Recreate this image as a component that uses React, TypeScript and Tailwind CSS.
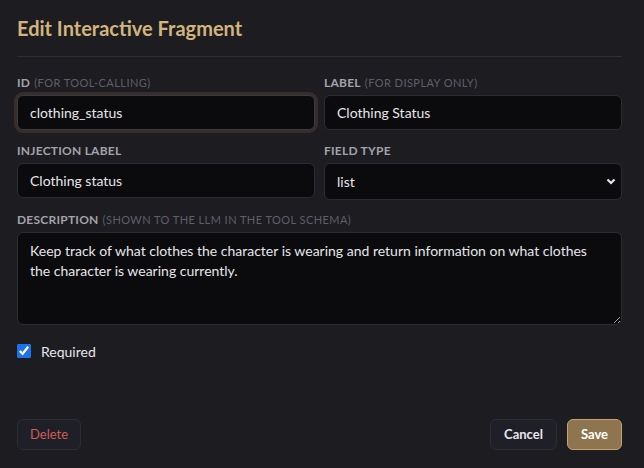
import { useState } from "react";

type LabelProps = {
    main: string
    hint?: string
}

function FieldLabel({ main, hint }: LabelProps) {
    return (
        <label className="block text-[12px] font-bold uppercase tracking-[0.02em] text-[#a3a3ab] leading-[16px] mb-[4px]">
            {main}
            {hint && <span className="ml-1 text-[11px] font-normal text-[#5f5f68] tracking-[0.04em]">{hint}</span>}
        </label>
    );
}

const inputCls =
    "w-full h-[35px] rounded-md border border-[#2c2c33] bg-[#0b0b0d] px-3 text-[14px] text-[#e6e6ea] outline-none";

export default function App() {
    const [required, setRequired] = useState(true);

    return (
        <div className="w-[644px] h-[468px] bg-[#1c1c21] font-['Lato','Liberation_Sans',sans-serif] flex flex-col pl-[17px] pr-[22px]">
            <h1 className="pt-[15px] pb-[15px] text-[20px] font-bold text-[#d3b47c] leading-[26px] border-b border-[#2e2e35]">
                Edit Interactive Fragment
            </h1>

            <div className="grid grid-cols-2 gap-x-[9px] gap-y-[13px] mt-[18px]">
                <div>
                    <FieldLabel main="ID" hint="(for tool-calling)" />
                    <input
                        className={inputCls + " ring-[3px] ring-[#352e2b] border-[#3a3a40]"}
                        defaultValue="clothing_status"
                    />
                </div>
                <div>
                    <FieldLabel main="Label" hint="(for display only)" />
                    <input className={inputCls} defaultValue="Clothing Status" />
                </div>
                <div>
                    <FieldLabel main="Injection Label" />
                    <input className={inputCls} defaultValue="Clothing status" />
                </div>
                <div>
                    <FieldLabel main="Field Type" />
                    <div className="relative">
                        <select className={inputCls + " h-[37px] appearance-none"} defaultValue="list">
                            <option value="text">text</option>
                            <option value="list">list</option>
                            <option value="number">number</option>
                        </select>
                        <svg
                            className="absolute right-[6px] top-[15px] pointer-events-none"
                            width="10"
                            height="7"
                            viewBox="0 0 10 7"
                        >
                            <path d="M1.5 1.5 L5 5 L8.5 1.5" fill="none" stroke="#e6e6ea" strokeWidth="2.2" />
                        </svg>
                    </div>
                </div>
                <div className="col-span-2 -mt-[1px]">
                    <FieldLabel main="Description" hint="(shown to the LLM in the tool schema)" />
                    <textarea
                        className="block w-full h-[93px] rounded-md border border-[#2c2c33] bg-[#0b0b0d] px-3 pt-[8px] text-[14px] leading-[20px] text-[#e6e6ea] outline-none"
                        defaultValue="Keep track of what clothes the character is wearing and return information on what clothes the character is wearing currently."
                    />
                </div>
            </div>

            <label className="flex items-center gap-[10px] mt-[16px] h-[20px] text-[14px] text-[#e6e6ea]">
                <input
                    type="checkbox"
                    checked={required}
                    onChange={(e) => setRequired(e.target.checked)}
                    className="w-[14px] h-[14px] accent-[#1a73e8]"
                />
                Required
            </label>

            <div className="mt-auto mb-[18px] flex items-center">
                <button className="h-[31px] px-[12px] rounded-md border border-[#2c2c33] bg-[#1f2027] text-[13px] text-[#d05a5a]">
                    Delete
                </button>
                <div className="ml-auto flex gap-[10px]">
                    <button className="h-[31px] px-[13px] rounded-md border border-[#2c2c33] bg-[#1f2027] text-[13px] font-bold text-[#e6e6ea]">
                        Cancel
                    </button>
                    <button className="h-[31px] px-[13px] rounded-md border border-[#c5a56c] bg-[#8e7550] text-[13px] font-bold text-white">
                        Save
                    </button>
                </div>
            </div>
        </div>
    );
}
